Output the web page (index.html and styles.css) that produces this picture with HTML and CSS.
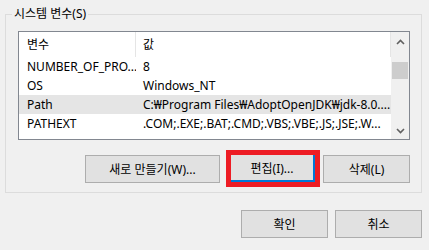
FILE: index.html
```html
<!DOCTYPE html>
<html lang="ko">
<head>
  <meta charset="UTF-8">
  <meta name="viewport" content="width=device-width, initial-scale=1.0">
  <title>시스템 변수</title>
  <link rel="stylesheet" href="styles.css">
</head>
<body>

  <!-- 시스템 변수 그룹 -->
  <div class="group">
    <span class="legend">시스템 변수(S)</span>

    <div class="listbox">
      <div class="list">
        <div class="row head">
          <div class="col-name">변수</div>
          <div class="col-value">값</div>
        </div>
        <div class="row">
          <div class="col-name">NUMBER_OF_PRO...</div>
          <div class="col-value">8</div>
        </div>
        <div class="row">
          <div class="col-name">OS</div>
          <div class="col-value">Windows_NT</div>
        </div>
        <div class="row selected">
          <div class="col-name">Path</div>
          <div class="col-value">C:₩Program Files₩AdoptOpenJDK₩jdk-8.0....</div>
        </div>
        <div class="row">
          <div class="col-name">PATHEXT</div>
          <div class="col-value">.COM;.EXE;.BAT;.CMD;.VBS;.VBE;.JS;.JSE;.W...</div>
        </div>
      </div>

      <!-- 스크롤바 -->
      <div class="scrollbar">
        <div class="arrow up">
          <svg width="9" height="6" viewBox="0 0 9 6"><path d="M1 5 L4.5 1.5 L8 5" fill="none" stroke="#606060" stroke-width="1.6"/></svg>
        </div>
        <div class="thumb"></div>
        <div class="spacer"></div>
        <div class="arrow down">
          <svg width="9" height="6" viewBox="0 0 9 6"><path d="M1 1 L4.5 4.5 L8 1" fill="none" stroke="#606060" stroke-width="1.6"/></svg>
        </div>
      </div>
    </div>

    <div class="actions">
      <button class="btn wide">새로 만들기(W)...</button>
      <span class="mark">
        <button class="btn focused">편집(I)...</button>
      </span>
      <button class="btn">삭제(L)</button>
    </div>
  </div>

  <div class="footer">
    <button class="btn">확인</button>
    <button class="btn">취소</button>
  </div>

</body>
</html>
```

FILE: styles.css
```css
/* Estilos Gerais */
body {
  margin: 0;
  background: #f0f0f0;
  font-family: "Noto Sans", "Noto Sans CJK KR", sans-serif;
  font-size: 12px;
  color: #000;
}
/* Grupo */
.group {
  position: relative;
  margin: 14px 0 0 5px;
  width: 415px;
  height: 177px;
  border: 1px solid #dcdcdc;
  padding: 16px 11px 0 12px;
  box-sizing: border-box;
  height: 179px;
  width: 417px;
}
.legend {
  position: absolute;
  left: 6px;
  top: -9px;
  padding: 0 2px;
  background: #f0f0f0;
  line-height: 16px;
}
/* Lista */
.listbox {
  display: flex;
  width: 392px;
  height: 109px;
  border: 1px solid #828790;
  box-sizing: border-box;
  background: #fff;
  overflow: hidden;
}
.list {
  flex: 1;
}
.row {
  display: flex;
  height: 19px;
  line-height: 19px;
  white-space: nowrap;
}
.row.head {
  height: 25px;
  line-height: 25px;
}
.row.selected {
  background: #e5e5e5;
}
.col-name {
  width: 117px;
  padding-left: 8px;
  box-sizing: border-box;
  overflow: hidden;
}
.col-value {
  flex: 1;
  padding-left: 7px;
  overflow: hidden;
}
.head .col-name {
  border-right: 1px solid #e5e5e5;
}
.head .col-value {
  border-right: 1px solid #e5e5e5;
}
/* Barra de rolagem */
.scrollbar {
  width: 18px;
  background: #f0f0f0;
  display: flex;
  flex-direction: column;
}
.arrow {
  display: flex;
  align-items: center;
  justify-content: center;
}
.arrow.up {
  height: 20px;
}
.arrow.down {
  height: 17px;
}
.thumb {
  margin: 10px 1px 0 1px;
  height: 17px;
  background: #cdcdcd;
}
.spacer {
  flex: 1;
}
/* Botoes */
.btn {
  font-family: inherit;
  font-size: 12px;
  color: #000;
  background: #e1e1e1;
  border: 1px solid #adadad;
  height: 28px;
  width: 87px;
  padding: 0;
  margin: 0;
}
.btn.wide {
  width: 135px;
}
.actions {
  display: flex;
  align-items: center;
  justify-content: flex-end;
  margin-top: 10px;
}
.mark {
  display: flex;
  border: 5px solid #ed1c24;
  margin: 0 3px 0 6px;
}
.btn.focused {
  width: 84px;
  height: 27px;
  border: 0;
  border-right: 2px solid #0078d7;
  border-bottom: 2px solid #0078d7;
}
.footer {
  display: flex;
  justify-content: flex-end;
  gap: 7px;
  width: 422px;
  margin-top: 17px;
}
```
